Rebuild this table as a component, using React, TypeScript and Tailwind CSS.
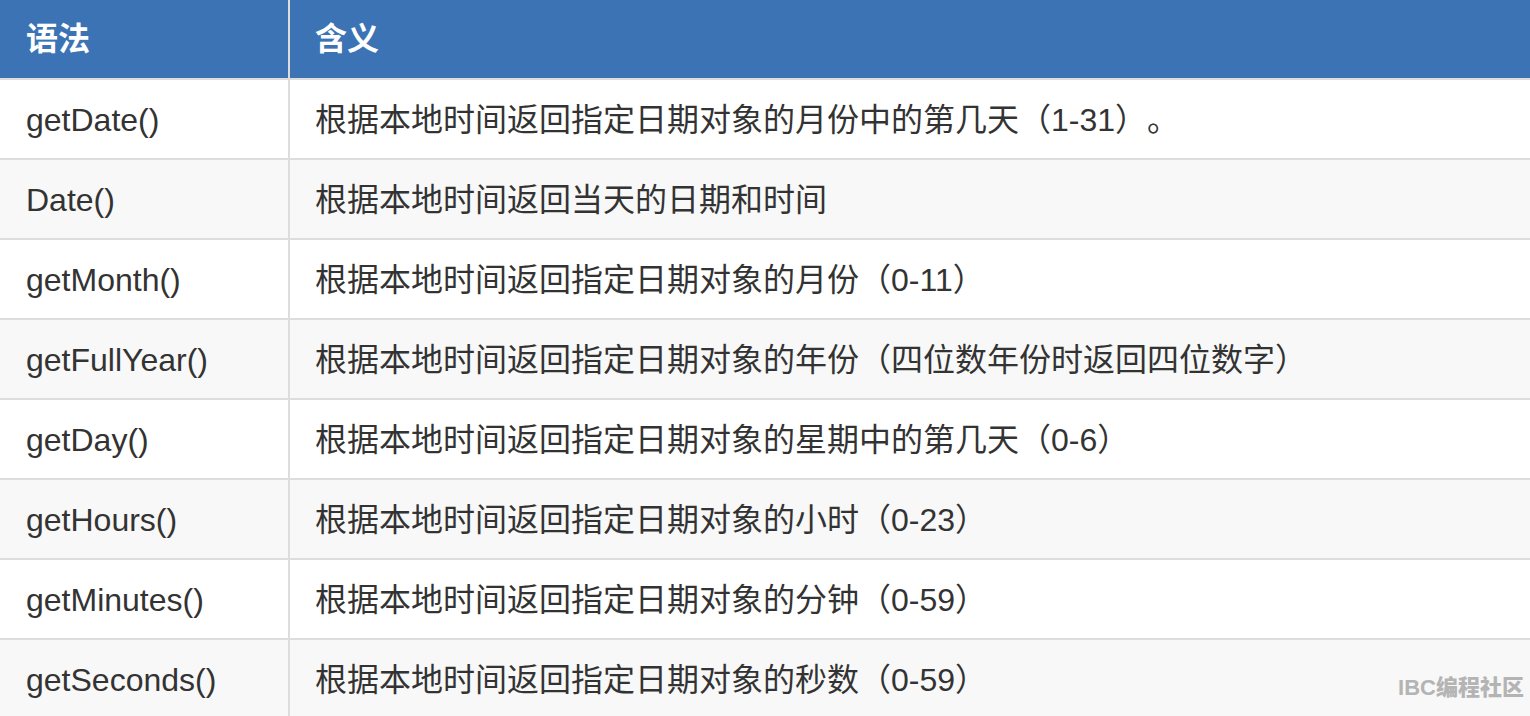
import React from "react";

const rows: [string, string][] = [
  ["getDate()", "根据本地时间返回指定日期对象的月份中的第几天（1-31）。"],
  ["Date()", "根据本地时间返回当天的日期和时间"],
  ["getMonth()", "根据本地时间返回指定日期对象的月份（0-11）"],
  ["getFullYear()", "根据本地时间返回指定日期对象的年份（四位数年份时返回四位数字）"],
  ["getDay()", "根据本地时间返回指定日期对象的星期中的第几天（0-6）"],
  ["getHours()", "根据本地时间返回指定日期对象的小时（0-23）"],
  ["getMinutes()", "根据本地时间返回指定日期对象的分钟（0-59）"],
  ["getSeconds()", "根据本地时间返回指定日期对象的秒数（0-59）"],
];

export default function App() {
  return (
    <div
      className="relative w-[1530px] h-[716px] overflow-hidden bg-white text-[32px] text-[#333] [text-spacing-trim:space-all]"
      style={{ fontFamily: '"Liberation Sans", "Noto Sans CJK SC", sans-serif' }}
    >
      <div className="flex h-[80px] bg-[#3c73b5] border-b-2 border-[#dddddd] text-white font-bold">
        <div className="w-[290px] shrink-0 border-r-2 border-[#dddddd] flex items-center pl-[26px]">语法</div>
        <div className="flex-1 flex items-center pl-[25px]">含义</div>
      </div>
      {rows.map(([a, b], i) => (
        <div
          key={a}
          className={`flex h-[80px] border-b-2 border-[#dddddd] ${i % 2 === 1 ? "bg-[#f8f8f8]" : "bg-white"}`}
        >
          <div className="w-[290px] shrink-0 border-r-2 border-[#dddddd] flex items-center pl-[26px] pt-[1px]">{a}</div>
          <div className="flex-1 flex items-center pl-[25px] pt-[1px] whitespace-nowrap">{b}</div>
        </div>
      ))}
      <div className="absolute right-[6px] bottom-[12px] text-[22px] font-black text-[#b4b4b4]">
        IBC编程社区
      </div>
    </div>
  );
}
